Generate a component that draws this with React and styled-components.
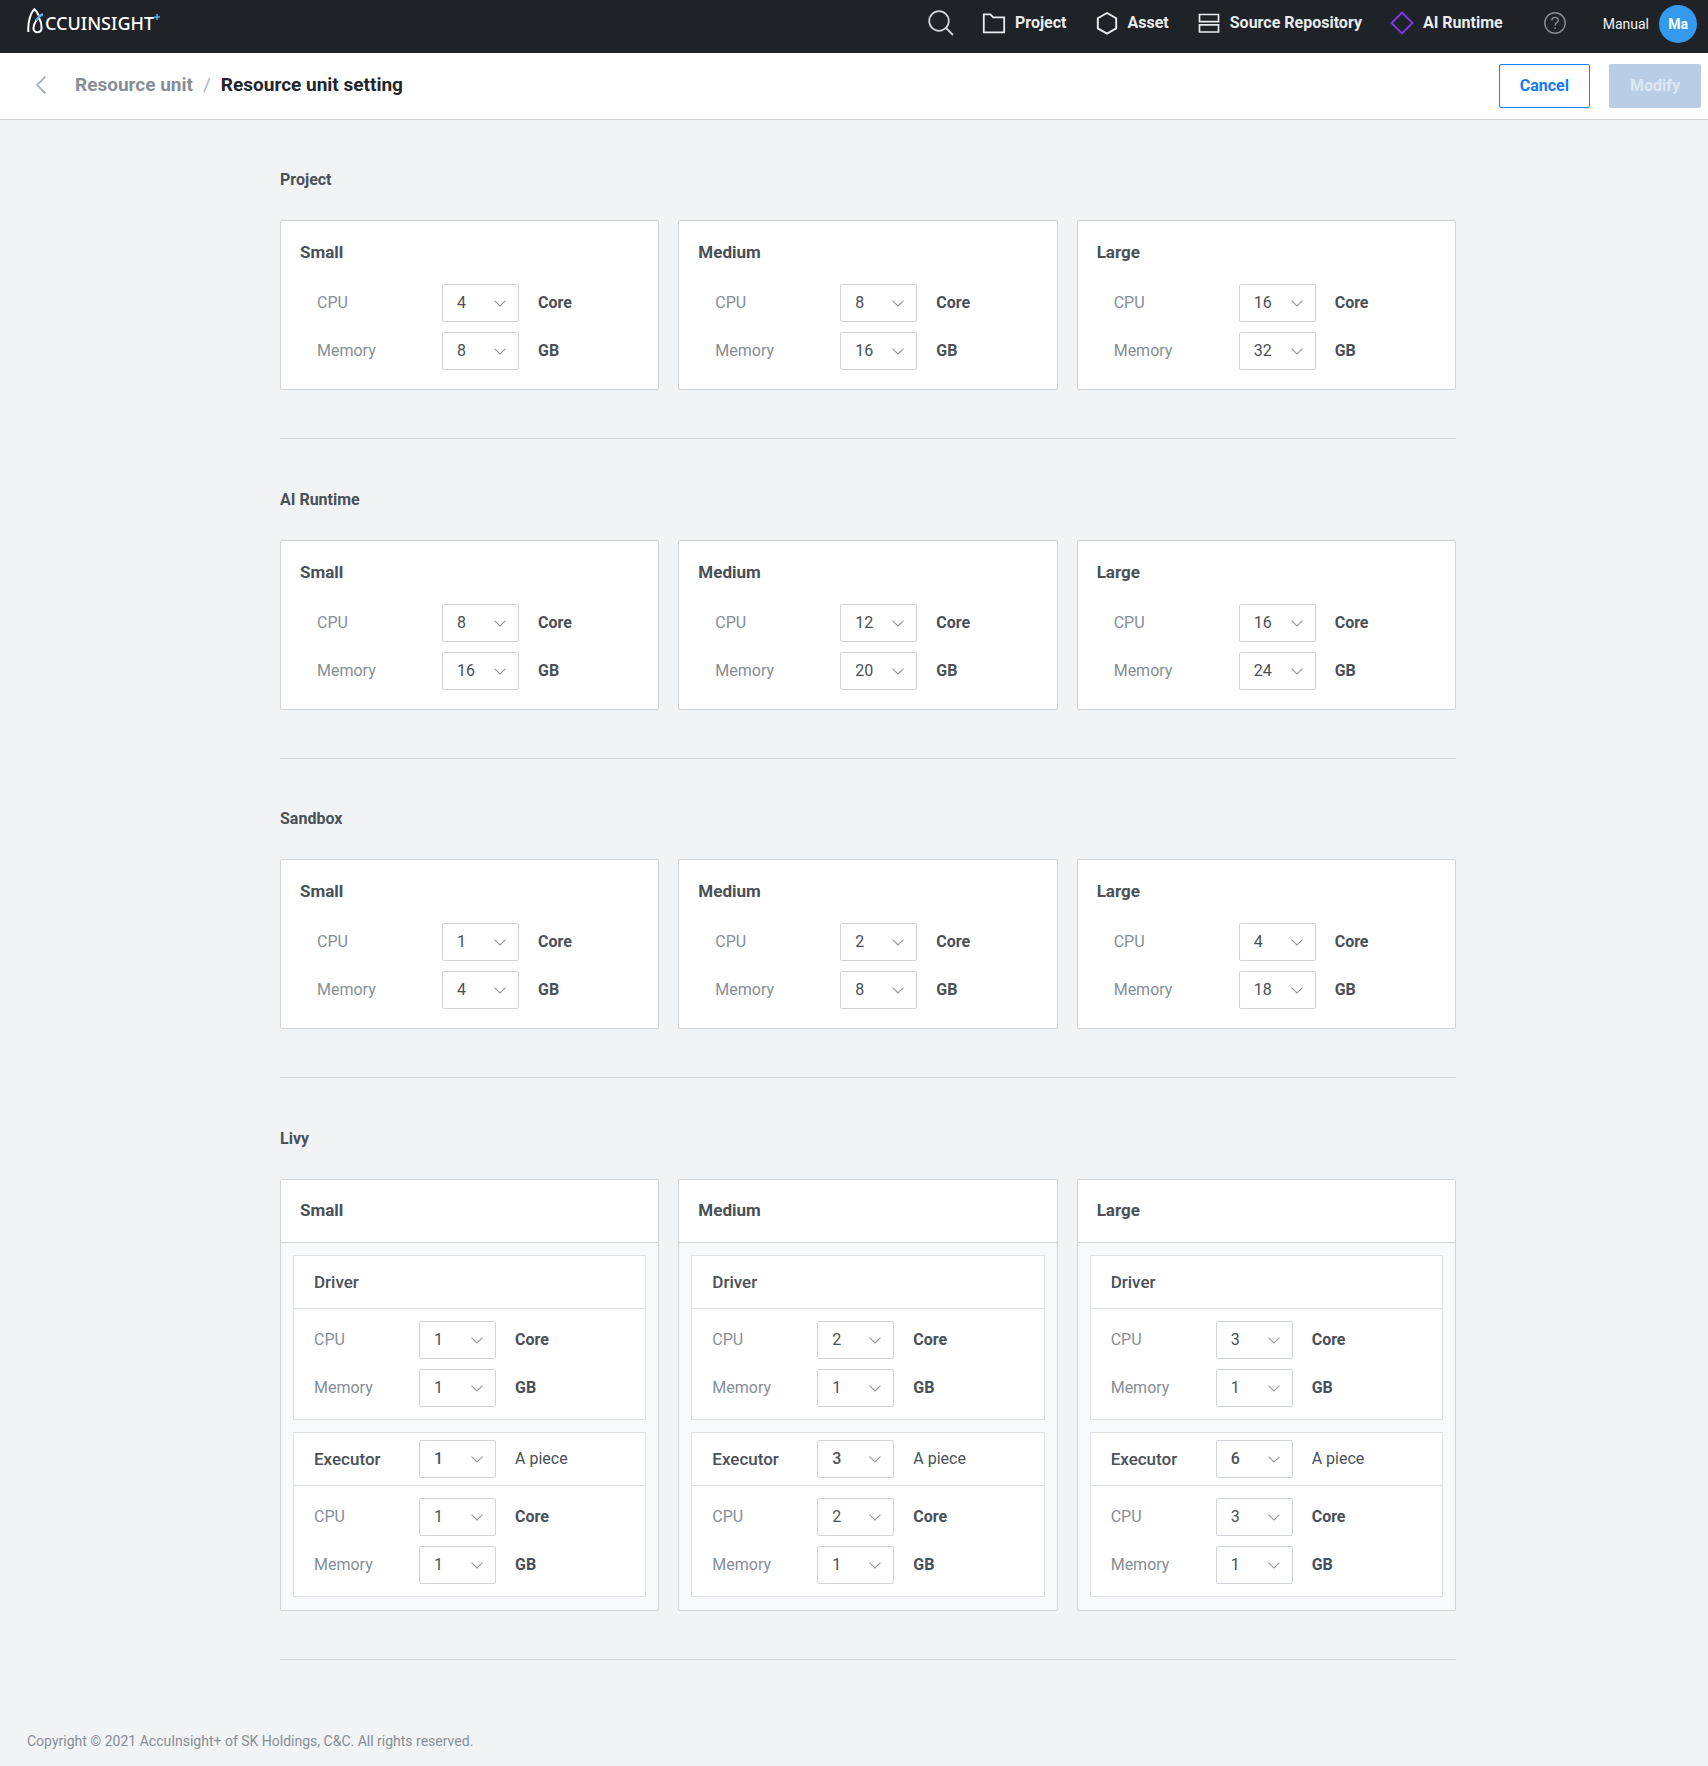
import React, { useId } from "react";
import styled, { createGlobalStyle } from "styled-components";

const GlobalStyle = createGlobalStyle`
  *, *::before, *::after { box-sizing: border-box; }
  body {
    margin: 0;
    background: #f1f3f5;
    color: #495057;
    font-family: Roboto, "Liberation Sans", sans-serif;
    font-size: 16px;
    line-height: 24px;
  }
  h1, h2, h3, h4, p { margin: 0; font-weight: 700; }
  button, select { font-family: inherit; }
`;

const TopBar = styled.header`
  display: flex;
  align-items: center;
  justify-content: space-between;
  height: 53px;
  padding: 0 11px 8px 27px;
  background: #1f2226;
`;

const Logo = styled.a`
  display: flex;
  align-items: flex-start;
  color: #ffffff;
  text-decoration: none;
  font-family: "Noto Sans", sans-serif;
  font-size: 18px;
  font-weight: 500;
  line-height: 34px;
`;

const LogoMark = styled.svg`
  width: 18px;
  height: 26px;
  margin-top: 2px;
`;

const LogoPlus = styled.svg`
  width: 6px;
  height: 6px;
  margin-top: 8px;
`;

const TopNav = styled.nav`
  display: flex;
  align-items: center;
`;

const NavLink = styled.a`
  display: flex;
  align-items: center;
  gap: 9px;
  margin-left: 28px;
  color: #e9ecef;
  text-decoration: none;
  font-size: 16px;
  font-weight: 700;
`;

const IconButton = styled.button`
  display: flex;
  margin-left: ${(p) => p.$gap || 0}px;
  padding: 0;
  border: 0;
  background: none;
  color: ${(p) => p.$color};
`;

const UserButton = styled.button`
  display: flex;
  align-items: center;
  gap: 10px;
  margin: 3px 0 0 36px;
  padding: 0;
  border: 0;
  background: none;
  color: #f1f3f5;
  font-size: 14px;
`;

const Avatar = styled.span`
  width: 38px;
  height: 38px;
  border-radius: 50%;
  background: #339af0;
  color: #ffffff;
  font-weight: 700;
  line-height: 38px;
`;

const TitleBar = styled.div`
  display: flex;
  align-items: center;
  justify-content: space-between;
  height: 67px;
  padding: 0 7px 0 34px;
  border-bottom: 1px solid #ced4da;
  background: #ffffff;
`;

const Breadcrumb = styled.nav`
  display: flex;
  align-items: center;
  gap: 10px;
  padding-bottom: 2px;
  color: #adb5bd;
  font-size: 19px;
`;

const BackButton = styled.button`
  display: flex;
  margin-right: 17px;
  padding: 0;
  border: 0;
  background: none;
  color: #adb5bd;
`;

const Crumb = styled.a`
  color: #868e96;
  text-decoration: none;
  font-weight: 700;
`;

const PageTitle = styled.h1`
  color: #212529;
  font-size: 19px;
`;

const Actions = styled.div`
  display: flex;
  gap: 19px;
`;

const Button = styled.button`
  height: 44px;
  padding: 0 20px 2px;
  border: 1px solid ${(p) => (p.$solid ? "#b9cde6" : "#1c7ef5")};
  border-radius: 2px;
  background: ${(p) => (p.$solid ? "#b9cde6" : "#ffffff")};
  color: ${(p) => (p.$solid ? "#dee7f2" : "#1677ff")};
  font-size: 16px;
  font-weight: 700;
`;

const Main = styled.main`
  max-width: 1204px;
  margin: 0 auto;
  padding-left: 28px;
`;

const Section = styled.section`
  padding: ${(p) => (p.$tight ? 48 : 49)}px 0 48px;
  border-bottom: 1px solid #ced4da;
`;

const SectionTitle = styled.h2`
  margin-bottom: 28px;
  font-size: 16px;
`;

const Cards = styled.div`
  display: grid;
  grid-template-columns: repeat(3, 1fr);
  gap: 19px;
`;

const Card = styled.article`
  padding: 19px;
  border: 1px solid #ced4da;
  border-radius: 2px;
  background: #ffffff;
`;

const CardTitle = styled.h3`
  font-size: 17px;
`;

const Fields = styled.div`
  display: grid;
  gap: 10px;
  padding: ${(p) => (p.$inset ? "20px 0 0 17px" : "12px 20px")};
`;

const Field = styled.div`
  display: grid;
  grid-template-columns: ${(p) => (p.$wide ? 125 : 105)}px 77px 1fr;
  align-items: center;
`;

const FieldLabel = styled.label`
  color: ${(p) => (p.$strong ? "#495057" : "#868e96")};
  font-size: ${(p) => (p.$strong ? 17 : 16)}px;
  font-weight: ${(p) => (p.$strong ? 500 : 400)};
`;

const Unit = styled.span`
  margin-left: 19px;
  font-weight: ${(p) => (p.$plain ? 400 : 700)};
`;

const SelectBox = styled.div`
  display: grid;
  grid-template-columns: 1fr 25px;
  align-items: center;
`;

const SelectControl = styled.select`
  grid-area: 1 / 1 / 2 / 3;
  width: 100%;
  height: 38px;
  padding: 0 26px 2px 14px;
  appearance: none;
  border: 1px solid #ced4da;
  border-radius: 2px;
  background: #ffffff;
  color: #495057;
  font-size: 16px;
  font-weight: ${(p) => (p.$strong ? 500 : 400)};
`;

const Chevron = styled.svg`
  grid-area: 1 / 2 / 2 / 3;
  width: 12px;
  height: 7px;
  pointer-events: none;
`;

const SplitCard = styled.article`
  border: 1px solid #ced4da;
  border-radius: 2px;
  background: #f8f9fb;
`;

const SplitHead = styled.div`
  padding: 18px 19px 20px;
  border-bottom: 1px solid #ced4da;
  background: #ffffff;
`;

const SplitBody = styled.div`
  display: grid;
  gap: 12px;
  padding: 12px 12px 13px;
`;

const Box = styled.div`
  border: 1px solid #dee2e6;
  background: #ffffff;
`;

const BoxHead = styled.div`
  display: grid;
  align-items: center;
  height: 53px;
  padding: 0 20px;
  border-bottom: 1px solid #dee2e6;
`;

const BoxTitle = styled.h4`
  font-size: 17px;
  font-weight: 500;
`;

const Footer = styled.footer`
  padding: 69px 27px 12px;
  color: #868e96;
  font-size: 14px;
`;

function Select({ id, value, strong }) {
  return (
    <SelectBox>
      <SelectControl id={id} defaultValue={value} $strong={strong}>
        <option>{value}</option>
      </SelectControl>
      <Chevron viewBox="0 0 12 7" fill="none" stroke="#959595" strokeWidth="1.1" aria-hidden="true">
        <path d="M0.5 0.6 6 6 11.5 0.6" />
      </Chevron>
    </SelectBox>
  );
}

function FieldRow({ label, value, unit, wide, strong, plain }) {
  const id = useId();
  return (
    <Field $wide={wide}>
      <FieldLabel htmlFor={id} $strong={strong}>{label}</FieldLabel>
      <Select id={id} value={value} strong={strong} />
      <Unit $plain={plain}>{unit}</Unit>
    </Field>
  );
}

const sizes = ["Small", "Medium", "Large"];

const groups = [
  { title: "Project", tight: true, units: [[4, 8], [8, 16], [16, 32]] },
  { title: "AI Runtime", units: [[8, 16], [12, 20], [16, 24]] },
  { title: "Sandbox", tight: true, units: [[1, 4], [2, 8], [4, 18]] },
];

const livy = [
  { driver: [1, 1], count: 1, executor: [1, 1] },
  { driver: [2, 1], count: 3, executor: [2, 1] },
  { driver: [3, 1], count: 6, executor: [3, 1] },
];

const Stroke = (props) => (
  <svg width="24" height="24" viewBox="0 0 24 24" fill="none" stroke="currentColor" aria-hidden="true" {...props} />
);

export default function App() {
  return (
    <>
      <GlobalStyle />
      <TopBar>
        <Logo href="#" aria-label="AccuInsight+">
          <LogoMark viewBox="0 0 18 26" fill="none" aria-hidden="true">
            <path d="M1.4 24C0.6 14.5 3.6 4.5 7.4 1.2 9.2 2.6 10.8 5 11.8 7.6" stroke="#fff" strokeWidth="2" />
            <path d="M15.6 6.2C10.5 9 7 15 6.4 20.2 6.4 25.6 14.6 25.6 14.6 19.4 14.6 16 13.4 12.4 11.8 9.6" stroke="#fff" strokeWidth="2" />
            <path d="M15.8 6.2C13 7.6 10.8 9.8 9 12.6" stroke="#4dabf7" strokeWidth="2" />
          </LogoMark>
          CCUINSIGHT
          <LogoPlus viewBox="0 0 6 6" stroke="#4dabf7" strokeWidth="1.6" aria-hidden="true">
            <path d="M3 0v6M0 3h6" />
          </LogoPlus>
        </Logo>
        <TopNav>
          <IconButton $color="#ced4da" aria-label="Search">
            <Stroke width="26" height="26" viewBox="0 0 26 26" strokeWidth="1.8">
              <circle cx="11" cy="11" r="9.8" />
              <path d="m18 18 7 7" />
            </Stroke>
          </IconButton>
          <NavLink href="#">
            <Stroke strokeWidth="1.8">
              <path d="M1.8 3.3h6.6l2.8 3h11v15H1.8z" />
            </Stroke>
            Project
          </NavLink>
          <NavLink href="#">
            <Stroke strokeWidth="1.9">
              <path d="M12 2 21.2 7.2v10.2L12 22.6 2.8 17.4V7.2z" />
            </Stroke>
            Asset
          </NavLink>
          <NavLink href="#">
            <Stroke strokeWidth="1.7">
              <path d="M2.5 3.5h19v7.2h-19zM2.5 13.8h19v7.2h-19z" />
            </Stroke>
            Source Repository
          </NavLink>
          <NavLink href="#">
            <Stroke stroke="#7c3aed" strokeWidth="1.9">
              <path d="M12 1.5 22.5 12 12 22.5 1.5 12z" />
            </Stroke>
            AI Runtime
          </NavLink>
          <IconButton $color="#868e96" $gap={40} aria-label="Help">
            <Stroke strokeWidth="1.4">
              <circle cx="12" cy="12" r="10.2" />
              <path d="M8.8 9.6c0-4.4 6.6-4 6.6-.4 0 2.4-3.3 2.4-3.3 5.2M12.1 16.3v1.7" />
            </Stroke>
          </IconButton>
          <UserButton>
            Manual
            <Avatar>Ma</Avatar>
          </UserButton>
        </TopNav>
      </TopBar>
      <TitleBar>
        <Breadcrumb aria-label="Breadcrumb">
          <BackButton aria-label="Back">
            <Stroke width="14" height="20" viewBox="0 0 14 20" strokeWidth="1.8">
              <path d="M11.5 1.5 3 10l8.5 8.5" />
            </Stroke>
          </BackButton>
          <Crumb href="#">Resource unit</Crumb>
          <span>/</span>
          <PageTitle>Resource unit setting</PageTitle>
        </Breadcrumb>
        <Actions>
          <Button type="button">Cancel</Button>
          <Button type="button" $solid disabled>Modify</Button>
        </Actions>
      </TitleBar>
      <Main>
        {groups.map((group) => (
          <Section key={group.title} $tight={group.tight}>
            <SectionTitle>{group.title}</SectionTitle>
            <Cards>
              {group.units.map(([cpu, memory], i) => (
                <Card key={sizes[i]}>
                  <CardTitle>{sizes[i]}</CardTitle>
                  <Fields $inset>
                    <FieldRow wide label="CPU" value={cpu} unit="Core" />
                    <FieldRow wide label="Memory" value={memory} unit="GB" />
                  </Fields>
                </Card>
              ))}
            </Cards>
          </Section>
        ))}
        <Section>
          <SectionTitle>Livy</SectionTitle>
          <Cards>
            {livy.map((item, i) => (
              <SplitCard key={sizes[i]}>
                <SplitHead><CardTitle>{sizes[i]}</CardTitle></SplitHead>
                <SplitBody>
                  <Box>
                    <BoxHead><BoxTitle>Driver</BoxTitle></BoxHead>
                    <Fields>
                      <FieldRow label="CPU" value={item.driver[0]} unit="Core" />
                      <FieldRow label="Memory" value={item.driver[1]} unit="GB" />
                    </Fields>
                  </Box>
                  <Box>
                    <BoxHead>
                      <FieldRow strong plain label="Executor" value={item.count} unit="A piece" />
                    </BoxHead>
                    <Fields>
                      <FieldRow label="CPU" value={item.executor[0]} unit="Core" />
                      <FieldRow label="Memory" value={item.executor[1]} unit="GB" />
                    </Fields>
                  </Box>
                </SplitBody>
              </SplitCard>
            ))}
          </Cards>
        </Section>
      </Main>
      <Footer>Copyright © 2021 AccuInsight+ of SK Holdings, C&amp;C. All rights reserved.</Footer>
    </>
  );
}
